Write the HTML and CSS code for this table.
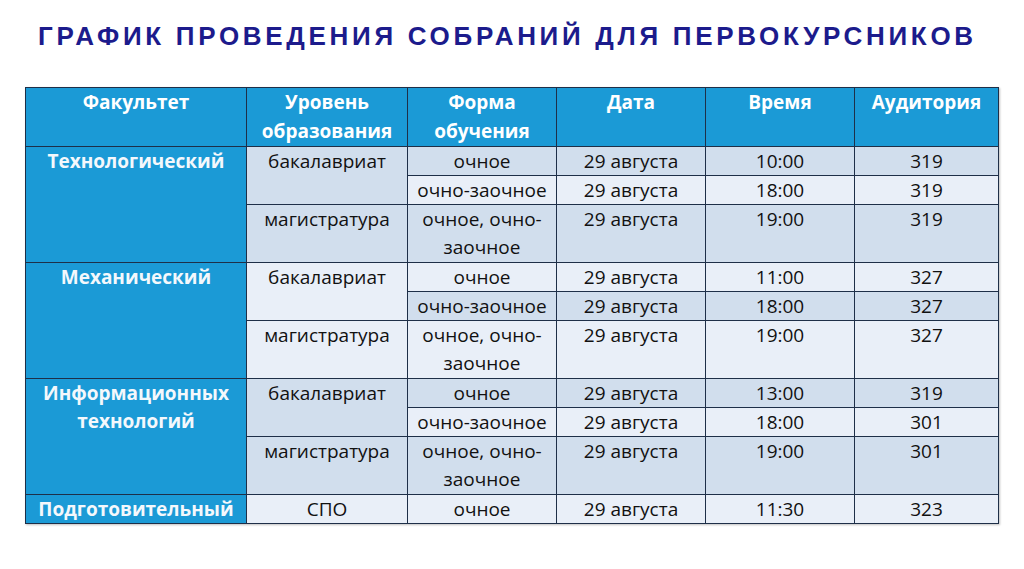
FILE: index.html
```html
<!DOCTYPE html>
<html lang="ru">
<head>
<meta charset="utf-8">
<title>График проведения собраний</title>
<link rel="stylesheet" href="styles.css">
</head>
<body>
<div class="page">
  <h1 class="title">ГРАФИК ПРОВЕДЕНИЯ СОБРАНИЙ ДЛЯ ПЕРВОКУРСНИКОВ</h1>
  <table class="schedule">
    <colgroup>
      <col class="c1"><col class="c2"><col class="c3"><col class="c4"><col class="c5"><col class="c6">
    </colgroup>
    <thead>
      <tr>
        <th>Факультет</th>
        <th>Уровень образования</th>
        <th>Форма обучения</th>
        <th>Дата</th>
        <th>Время</th>
        <th>Аудитория</th>
      </tr>
    </thead>
    <tbody>
      <tr class="dark">
        <td class="fac" rowspan="3">Технологический</td>
        <td rowspan="2">бакалавриат</td>
        <td>очное</td><td>29 августа</td><td>10:00</td><td>319</td>
      </tr>
      <tr class="light">
        <td>очно-заочное</td><td>29 августа</td><td>18:00</td><td>319</td>
      </tr>
      <tr class="dark">
        <td>магистратура</td>
        <td class="two">очное, очно-<br>заочное</td><td>29 августа</td><td>19:00</td><td>319</td>
      </tr>
      <tr class="light">
        <td class="fac" rowspan="3">Механический</td>
        <td rowspan="2">бакалавриат</td>
        <td>очное</td><td>29 августа</td><td>11:00</td><td>327</td>
      </tr>
      <tr class="dark">
        <td>очно-заочное</td><td>29 августа</td><td>18:00</td><td>327</td>
      </tr>
      <tr class="light">
        <td>магистратура</td>
        <td class="two">очное, очно-<br>заочное</td><td>29 августа</td><td>19:00</td><td>327</td>
      </tr>
      <tr class="dark">
        <td class="fac" rowspan="3">Информационных<br>технологий</td>
        <td rowspan="2">бакалавриат</td>
        <td>очное</td><td>29 августа</td><td>13:00</td><td>319</td>
      </tr>
      <tr class="light">
        <td>очно-заочное</td><td>29 августа</td><td>18:00</td><td>301</td>
      </tr>
      <tr class="dark">
        <td>магистратура</td>
        <td class="two">очное, очно-<br>заочное</td><td>29 августа</td><td>19:00</td><td>301</td>
      </tr>
      <tr class="light">
        <td class="fac">Подготовительный</td>
        <td>СПО</td>
        <td>очное</td><td>29 августа</td><td>11:30</td><td>323</td>
      </tr>
    </tbody>
  </table>
</div>
</body>
</html>
```
FILE: styles.css
```css
html, body {
  margin: 0;
  padding: 0;
  background: #ffffff;
}

.page {
  width: 1024px;
  height: 569px;
  padding: 21px 0 0 25px;
  box-sizing: border-box;
}

.title {
  margin: 0 0 0 13px;
  font-family: "Liberation Sans", Arial, sans-serif;
  font-weight: bold;
  font-size: 26px;
  line-height: 30px;
  letter-spacing: 3.7px;
  color: #1c1b8c;
  white-space: nowrap;
}

.schedule {
  margin-top: 36px;
  border-collapse: collapse;
  table-layout: fixed;
  width: 973px;
  font-family: "Open Sans", "Liberation Sans", sans-serif;
  font-size: 19px;
  line-height: 28px;
  color: #111111;
  box-shadow: 1px 1px 2px rgba(0, 0, 0, 0.25);
}

.c1 { width: 221px; }
.c2 { width: 161px; }
.c3 { width: 149px; }
.c4 { width: 149px; }
.c5 { width: 149px; }
.c6 { width: 144px; }

.schedule th,
.schedule td {
  border: 1px solid #1e2f48;
  padding: 0;
  text-align: center;
  vertical-align: top;
}

.schedule th {
  background: #1b9ad6;
  color: #ffffff;
  font-weight: bold;
  line-height: 29px;
  height: 58px;
  padding-top: 0;
}

.schedule td.two {
  padding-bottom: 1px;
}

.schedule td.fac {
  background: #1b9ad6;
  color: #f4f8fc;
  font-weight: bold;
}

.dark td {
  background: #d1deed;
}

.light td {
  background: #e9eff8;
}
```
